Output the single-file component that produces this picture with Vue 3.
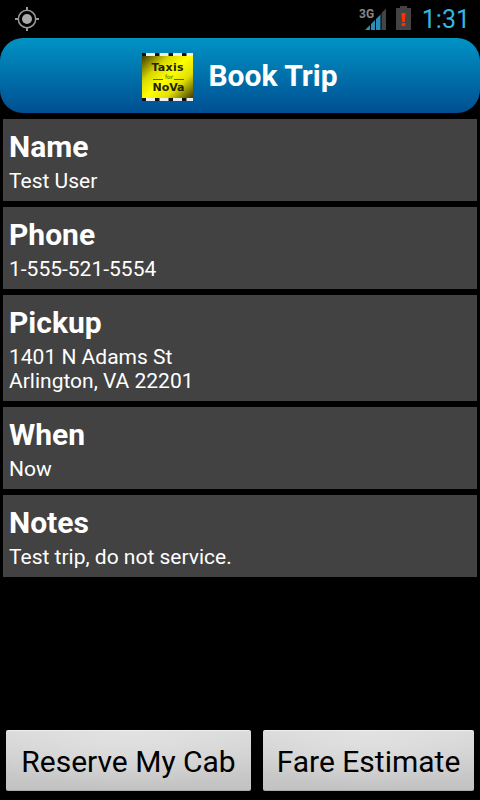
<template>
  <div class="screen">
    <div class="status-bar">
      <svg class="gps" width="24" height="24" viewBox="0 0 24 24">
        <circle cx="12" cy="12" r="8.7" fill="none" stroke="#999" stroke-width="1.5" />
        <circle cx="12" cy="12" r="5" fill="#aaa" />
        <path d="M12 0v4M12 20v4M0 12h4M20 12h4" stroke="#999" stroke-width="2" />
      </svg>

      <div class="status-right">
        <svg width="28" height="26" viewBox="0 0 28 26">
          <text x="0" y="12" class="network">3G</text>
          <path d="M6 24L22 8V24Z" fill="#2b8cb5" />
          <path d="M22 7.5L27 2.500V24H22Z" fill="#444" />
          <path d="M11.500 16v8M16.500 12v12M22 6v18" stroke="#000" stroke-width="1" />
        </svg>
        <svg width="15" height="24" viewBox="0 0 15 24">
          <path d="M4 0h7v2h4v22H0V2h4z" fill="#434343" />
          <path d="M5.500 7h4l-.7 9H6.200zM5.700 17h3.600v3H5.700z" fill="#ff3000" />
        </svg>
        <span class="clock">1:31</span>
      </div>
    </div>

    <header class="header">
      <svg class="logo" width="51" height="48" viewBox="0 0 51 48">
        <defs>
          <linearGradient id="taxi" x1="0" y1="0" x2="1" y2="1">
            <stop offset="0" stop-color="#2b2800" />
            <stop offset="0.3" stop-color="#d8d800" />
            <stop offset="0.5" stop-color="#ffff00" />
            <stop offset="0.7" stop-color="#e0e000" />
            <stop offset="1" stop-color="#2b2800" />
          </linearGradient>
        </defs>
        <rect width="51" height="48" fill="url(#taxi)" />
        <rect width="51" height="3" fill="#111" />
        <rect y="45" width="51" height="3" fill="#111" />
        <path
          d="M4 1.500H51M4 46.500H51"
          stroke="#eee"
          stroke-width="3"
          stroke-dasharray="9 4.500"
        />
        <text x="25.500" y="18" textLength="32" class="logo-name">Taxis</text>
        <text x="27" y="26" class="logo-for">for</text>
        <path d="M11 26.500h10M32 26.500h10" stroke="#666600" />
        <text x="26.500" y="37.500" textLength="32" class="logo-name">NoVa</text>
      </svg>
      <h1>Book Trip</h1>
    </header>

    <main class="fields">
      <section v-for="field in fields" :key="field.label" class="field">
        <h2 :style="{ letterSpacing: field.spacing }">{{ field.label }}</h2>
        <p v-for="line in field.lines" :key="line">{{ line }}</p>
      </section>
    </main>

    <footer class="actions">
      <button class="reserve">Reserve My Cab</button>
      <button class="estimate">Fare Estimate</button>
    </footer>
  </div>
</template>

<script setup>
const fields = [
  { label: 'Name', lines: ['Test User'] },
  { label: 'Phone', lines: ['1-555-521-5554'] },
  { label: 'Pickup', lines: ['1401 N Adams St', 'Arlington, VA 22201'] },
  { label: 'When', lines: ['Now'] },
  { label: 'Notes', lines: ['Test trip, do not service.'] },
]
</script>

<style>
body {
  margin: 0;
  background: #000;
}
</style>

<style scoped>
.screen {
  display: flex;
  flex-direction: column;
  width: 480px;
  height: 800px;
  overflow: hidden;
  background: #000;
  color: #fff;
  font-family: Roboto, sans-serif;
}

.status-bar {
  display: flex;
  justify-content: space-between;
  height: 38px;
}

.gps {
  margin: 7px 0 0 15px;
}

.status-right {
  display: flex;
  align-items: flex-start;
  padding: 6px 10px 0 0;
}

.status-right svg {
  flex: none;
}

.status-right svg + svg {
  margin-left: 9px;
}

.network {
  font-size: 12px;
  font-weight: 700;
  fill: #888;
}

.clock {
  margin-left: 11px;
  color: #33b5e5;
  font-size: 25px;
  line-height: 28px;
}

.header {
  display: flex;
  justify-content: center;
  align-items: center;
  gap: 15px;
  height: 75px;
  border-radius: 23px;
  background: linear-gradient(#0093c4, #004f92);
}

.logo {
  margin-top: 2px;
}

.logo-name {
  font: 700 11px 'DejaVu Sans', sans-serif;
  text-anchor: middle;
  fill: #222200;
}

.logo-for {
  font: 6px 'DejaVu Sans', sans-serif;
  text-anchor: middle;
  fill: #555500;
}

h1,
h2,
p {
  margin: 0;
}

h1 {
  font-size: 30px;
  line-height: 35px;
  white-space: nowrap;
}

.fields {
  display: flex;
  flex: 1;
  flex-direction: column;
  gap: 6px;
  padding: 6px 3px 0;
}

.field {
  padding: 10px 6px 8px;
  background: #424242;
}

.field h2 {
  margin-bottom: 5px;
  font-size: 30px;
  line-height: 35px;
}

.field p {
  font-size: 21px;
  line-height: 24px;
}

.actions {
  display: flex;
  gap: 12px;
  padding: 0 6px 9px;
}

.actions button {
  height: 61px;
  padding: 2px 0 0;
  border: 0;
  border-top: 1px solid #eee;
  border-bottom: 1px solid #aaa;
  border-radius: 2px;
  background: radial-gradient(ellipse 75% 95% at 50% 0, #e2e2e2, transparent), linear-gradient(#d8d8d8, #c2c2c2);
  color: #000;
  font-family: inherit;
  font-size: 30px;
  white-space: nowrap;
}

.actions .reserve {
  width: 245px;
}

.actions .estimate {
  width: 211px;
}
</style>
